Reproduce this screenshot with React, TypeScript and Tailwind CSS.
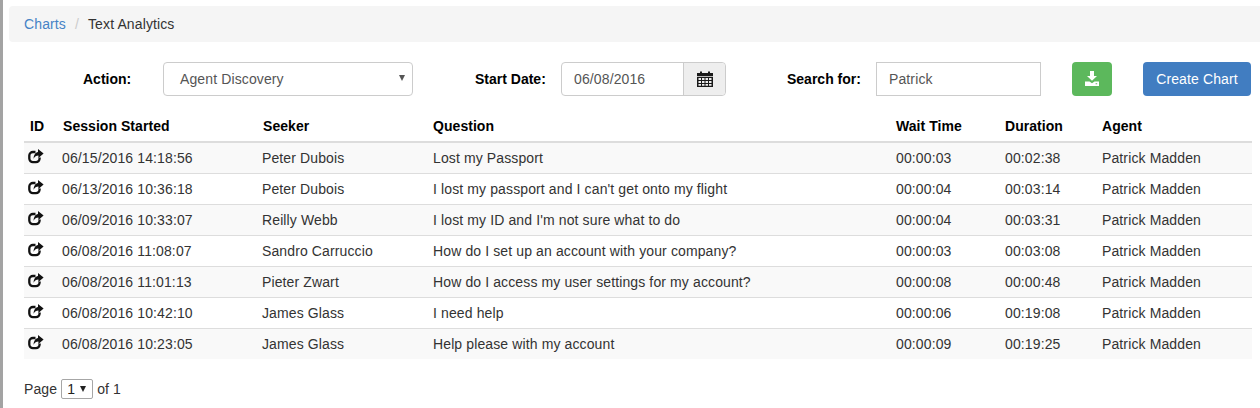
import React from "react";

const rows = [
  ["06/15/2016 14:18:56", "Peter Dubois", "Lost my Passport", "00:00:03", "00:02:38"],
  ["06/13/2016 10:36:18", "Peter Dubois", "I lost my passport and I can't get onto my flight", "00:00:04", "00:03:14"],
  ["06/09/2016 10:33:07", "Reilly Webb", "I lost my ID and I'm not sure what to do", "00:00:04", "00:03:31"],
  ["06/08/2016 11:08:07", "Sandro Carruccio", "How do I set up an account with your company?", "00:00:03", "00:03:08"],
  ["06/08/2016 11:01:13", "Pieter Zwart", "How do I access my user settings for my account?", "00:00:08", "00:00:48"],
  ["06/08/2016 10:42:10", "James Glass", "I need help", "00:00:06", "00:19:08"],
  ["06/08/2016 10:23:05", "James Glass", "Help please with my account", "00:00:09", "00:19:25"],
];

function ShareIcon() {
  return (
    <svg width="16" height="15" viewBox="0 0 16 15" className="block">
      <path d="M7.5 3H5A3.6 3.6 0 0 0 1.3 6.6V9.6A3.6 3.6 0 0 0 5 13.2H8A3.6 3.6 0 0 0 11.6 9.6V8.5" fill="none" stroke="#111" strokeWidth="2.3" />
      <path d="M10 0L15.6 4.4L10.4 9V6.6C8.2 6.6 6.8 7.6 5.6 9.8C5.6 6 7.4 3.2 10 2.9Z" fill="#111" />
    </svg>
  );
}

function CalendarIcon() {
  return (
    <svg width="16" height="16" viewBox="0 0 16 16" className="block">
      <path d="M0 2H3V0.5H5V2H11V0.5H13V2H16V5H0Z" fill="#1a1a1a" />
      <path fillRule="evenodd" d="M0 5.8H16V16H0ZM1.5 7V9H4V7ZM5 7V9H7.5V7ZM8.5 7V9H11V7ZM12 7V9H14.5V7ZM1.5 10V12H4V10ZM5 10V12H7.5V10ZM8.5 10V12H11V10ZM12 10V12H14.5V10ZM1.5 13V14.8H4V13ZM5 13V14.8H7.5V13ZM8.5 13V14.8H11V13ZM12 13V14.8H14.5V13Z" fill="#1a1a1a" />
    </svg>
  );
}

function DownloadIcon() {
  return (
    <svg width="14" height="15" viewBox="0 0 14 15" className="block">
      <path d="M5 0H9V5H12L7 9.8L2 5H5Z" fill="#fff" />
      <path fillRule="evenodd" d="M0 10.5H4.5L7 12.2L9.5 10.5H14V15H0ZM10.6 12.2V13.3H12.2V12.2Z" fill="#fff" />
    </svg>
  );
}

const th = "h-[31px] px-[6px] pb-[4px] text-left align-bottom font-bold text-[14px] tracking-[0.05px] text-black border-b-2 border-[#dddddd]";
const td = "h-[31px] pt-[2px] align-middle text-[14px] tracking-[0.12px] text-[#333333] border-b border-[#dddddd]";
const label = "text-[14px] font-bold tracking-[0px] text-black whitespace-nowrap";

export default function App() {
  return (
    <div className="h-[408px] w-[1260px] overflow-hidden bg-white font-['Liberation_Sans',Arial,sans-serif] text-[14px] tracking-[0.12px] text-[#333333]">
      <div className="flex h-full">
        <div className="w-[3px] shrink-0 bg-[#a3a3a3]" />
        <div className="min-w-0 flex-1">
          <nav className="ml-[6px] mt-[6px] flex h-[36px] items-center rounded-l-[4px] bg-[#f5f5f5] pl-[15px]">
            <span className="text-[#4583c6]">Charts</span>
            <span className="px-[9px] text-[#cccccc]">/</span>
            <span>Text Analytics</span>
          </nav>

          <div className="mt-[20px] flex h-[34px] items-center">
            <span className={`${label} ml-[80px] w-[50px]`}>Action:</span>
            <div className="relative ml-[30px] flex h-[34px] w-[250px] items-center rounded-[4px] border border-[#cccccc] pl-[16px] text-[#555555]">
              Agent Discovery
              <span className="absolute right-[7px] top-[12px] h-0 w-0 border-x-[3px] border-t-[6px] border-x-transparent border-t-[#555555]" />
            </div>
            <span className={`${label} ml-[62px] w-[70px]`}>Start Date:</span>
            <div className="ml-[16px] flex h-[34px] w-[165px] rounded-[4px] border border-[#cccccc] text-[#555555]">
              <div className="flex flex-1 items-center pl-[12px]">06/08/2016</div>
              <div className="flex w-[42px] items-center justify-center rounded-r-[4px] border-l border-[#cccccc] bg-[#eeeeee]">
                <CalendarIcon />
              </div>
            </div>
            <span className={`${label} ml-[61px] w-[73px]`}>Search for:</span>
            <div className="ml-[16px] flex h-[34px] w-[165px] items-center border border-[#cccccc] pl-[12px] text-[#555555]">Patrick</div>
            <div className="ml-[31px] flex h-[34px] w-[40px] items-center justify-center rounded-[4px] bg-[#5cb85c] pb-[2px] pr-[1px]">
              <DownloadIcon />
            </div>
            <div className="ml-[31px] flex h-[34px] w-[108px] items-center justify-center rounded-[4px] bg-[#417dc1] text-white">Create Chart</div>
          </div>

          <div className="ml-[21px] mt-[15px] w-[1228px]">
            <table className="w-full table-fixed border-collapse">
              <colgroup>
                <col className="w-[33px]" />
                <col className="w-[200px]" />
                <col className="w-[170px]" />
                <col className="w-[463px]" />
                <col className="w-[109px]" />
                <col className="w-[97px]" />
                <col />
              </colgroup>
              <thead>
                <tr>
                  {["ID", "Session Started", "Seeker", "Question", "Wait Time", "Duration", "Agent"].map((h) => (
                    <th key={h} className={th}>{h}</th>
                  ))}
                </tr>
              </thead>
              <tbody>
                {rows.map((r, i) => (
                  <tr key={i} className={i % 2 === 0 ? "bg-[#f9f9f9]" : "bg-white"}>
                    <td className="h-[31px] border-b border-[#dddddd] pb-[3px] pl-[4px] align-middle [tr:last-child_&]:border-b-0"><ShareIcon /></td>
                    {r.map((c, j) => (
                      <td key={j} className={`${td} ${j < 2 ? "px-[5px]" : "px-[6px]"} [tr:last-child_&]:border-b-0`}>{c}</td>
                    ))}
                    <td className={`${td} px-[6px] [tr:last-child_&]:border-b-0`}>Patrick Madden</td>
                  </tr>
                ))}
              </tbody>
            </table>
          </div>

          <div className="ml-[21px] mt-[20px] flex h-[20px] items-center">
            <span>Page</span>
            <div className="relative ml-[4px] mr-[4px] h-[20px] w-[32px] rounded-[2px] border border-[#a6a6a6] pl-[5px] leading-[18px] text-[#222222]">
              1
              <span className="absolute right-[6px] top-[6px] h-0 w-0 border-x-[3px] border-t-[6px] border-x-transparent border-t-[#222222]" />
            </div>
            <span>of 1</span>
          </div>
        </div>
      </div>
    </div>
  );
}
